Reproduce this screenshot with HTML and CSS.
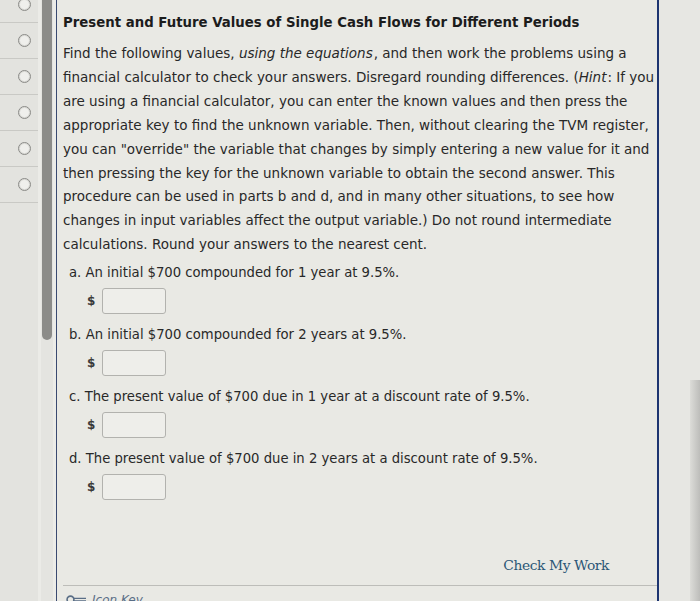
FILE: index.html
```html
<!DOCTYPE html>
<html>
<head>
<meta charset="utf-8">
<link rel="stylesheet" href="styles.css">
</head>
<body>
<div class="screen">
  <aside class="sidebar">
    <ul class="radios">
      <li><span class="radio"></span></li>
      <li><span class="radio"></span></li>
      <li><span class="radio"></span></li>
      <li><span class="radio"></span></li>
      <li><span class="radio"></span></li>
      <li><span class="radio"></span></li>
    </ul>
  </aside>
  <div class="scrollbar"><div class="thumb"></div></div>
  <main class="panel">
    <h1 class="title">Present and Future Values of Single Cash Flows for Different Periods</h1>
    <p class="intro">Find the following values, <em>using the equations</em>, and then work the problems using a financial calculator to check your answers. Disregard rounding differences. (<em>Hint</em>: If you are using a financial calculator, you can enter the known values and then press the appropriate key to find the unknown variable. Then, without clearing the TVM register, you can "override" the variable that changes by simply entering a new value for it and then pressing the key for the unknown variable to obtain the second answer. This procedure can be used in parts b and d, and in many other situations, to see how changes in input variables affect the output variable.) Do not round intermediate calculations. Round your answers to the nearest cent.</p>
    <ol class="parts">
      <li class="part">
        <div class="question">a. An initial $700 compounded for 1 year at 9.5%.</div>
        <div class="answer"><span class="cur">$</span><span class="box"></span></div>
      </li>
      <li class="part">
        <div class="question">b. An initial $700 compounded for 2 years at 9.5%.</div>
        <div class="answer"><span class="cur">$</span><span class="box"></span></div>
      </li>
      <li class="part">
        <div class="question">c. The present value of $700 due in 1 year at a discount rate of 9.5%.</div>
        <div class="answer"><span class="cur">$</span><span class="box"></span></div>
      </li>
      <li class="part">
        <div class="question">d. The present value of $700 due in 2 years at a discount rate of 9.5%.</div>
        <div class="answer"><span class="cur">$</span><span class="box"></span></div>
      </li>
    </ol>
    <div class="actions"><a class="check">Check My Work</a></div>
    <div class="footer">
      <span class="key-icon"><svg width="22" height="11" viewBox="0 0 22 11"><circle cx="4.5" cy="5.5" r="3.4" fill="none" stroke="#5a6e86" stroke-width="1.6"/><path d="M8 4.3h12M8 7h12" stroke="#5a6e86" stroke-width="1.3"/></svg></span>
      <span class="key-label">Icon Key</span>
    </div>
  </main>
  <div class="right-edge"><div class="shade"></div></div>
</div>
</body>
</html>
```
FILE: styles.css
```css
html, body {
  margin: 0;
  padding: 0;
  background: #e6e6e1;
}
.screen {
  display: flex;
  width: 700px;
  height: 601px;
  overflow: hidden;
  font-family: "DejaVu Sans", Verdana, sans-serif;
  color: #282828;
}
.sidebar {
  width: 38px;
  flex: none;
  background: #e3e3df;
  border-right: 3px solid #ebebe7;
}
.radios {
  list-style: none;
  margin: -13px 0 0 0;
  padding: 0;
}
.radios li {
  height: 35px;
  border-bottom: 1px solid #c9c9c5;
  display: flex;
  align-items: center;
  justify-content: flex-end;
  padding-right: 7px;
}
.radio {
  width: 11px;
  height: 11px;
  border-radius: 50%;
  border: 1.5px solid #8a8a87;
  background: #efefec;
  box-shadow: inset 0 0 0 1px #d8d8d4;
}
.scrollbar {
  width: 12px;
  flex: none;
  background: #e4e4e0;
  border-right: 3px solid #ecece8;
}
.thumb {
  margin: 0 1px;
  height: 340px;
  background: #8c8c89;
  border-radius: 0 0 5px 5px;
}
.panel {
  width: 603px;
  flex: none;
  border-left: 1px solid #3a4a70;
  border-right: 2px solid #1d3470;
  background: #e9e9e4;
  padding: 0 0 0 6px;
  box-sizing: border-box;
  display: flex;
  flex-direction: column;
}
.title {
  margin: 13px 0 0 0;
  font-size: 13.3px;
  font-weight: bold;
  line-height: 20px;
  color: #1c1c1c;
}
.intro {
  margin: 9px 0 0 0;
  font-size: 13.5px;
  line-height: 23.9px;
  max-width: 592px;
}
.intro em {
  padding-right: 1px;
}
.parts {
  list-style: none;
  margin: 5px 0 0 6px;
  padding: 0;
  font-size: 13.2px;
}
.question {
  line-height: 22px;
}
.answer {
  display: flex;
  align-items: center;
  gap: 7px;
  height: 28px;
  margin: 3px 0 9px 18px;
}
.cur {
  font-weight: bold;
  font-size: 12px;
  color: #3a3a3a;
}
.box {
  width: 62px;
  height: 24px;
  border: 1px solid #b2b2ae;
  border-radius: 3px;
  background: #eeeeea;
}
.actions {
  display: flex;
  justify-content: flex-end;
  margin-top: 46px;
  padding-right: 48px;
}
.check {
  font-family: "DejaVu Serif", Georgia, serif;
  font-size: 13.8px;
  line-height: 18px;
  color: #2b5676;
  letter-spacing: -0.4px;
}
.footer {
  margin-top: 11px;
  border-top: 1px solid #bdbdb9;
  display: flex;
  align-items: center;
  gap: 4px;
  padding: 4px 0 0 3px;
}
.key-label {
  font-style: italic;
  font-size: 12px;
  color: #5a6e86;
}
.right-edge {
  flex: 1;
  display: flex;
  justify-content: flex-end;
  background: #e7e7e3;
}
.shade {
  width: 10px;
  margin-top: 380px;
  background: linear-gradient(to right, #dcdcd8, #bdbdba);
}
```
